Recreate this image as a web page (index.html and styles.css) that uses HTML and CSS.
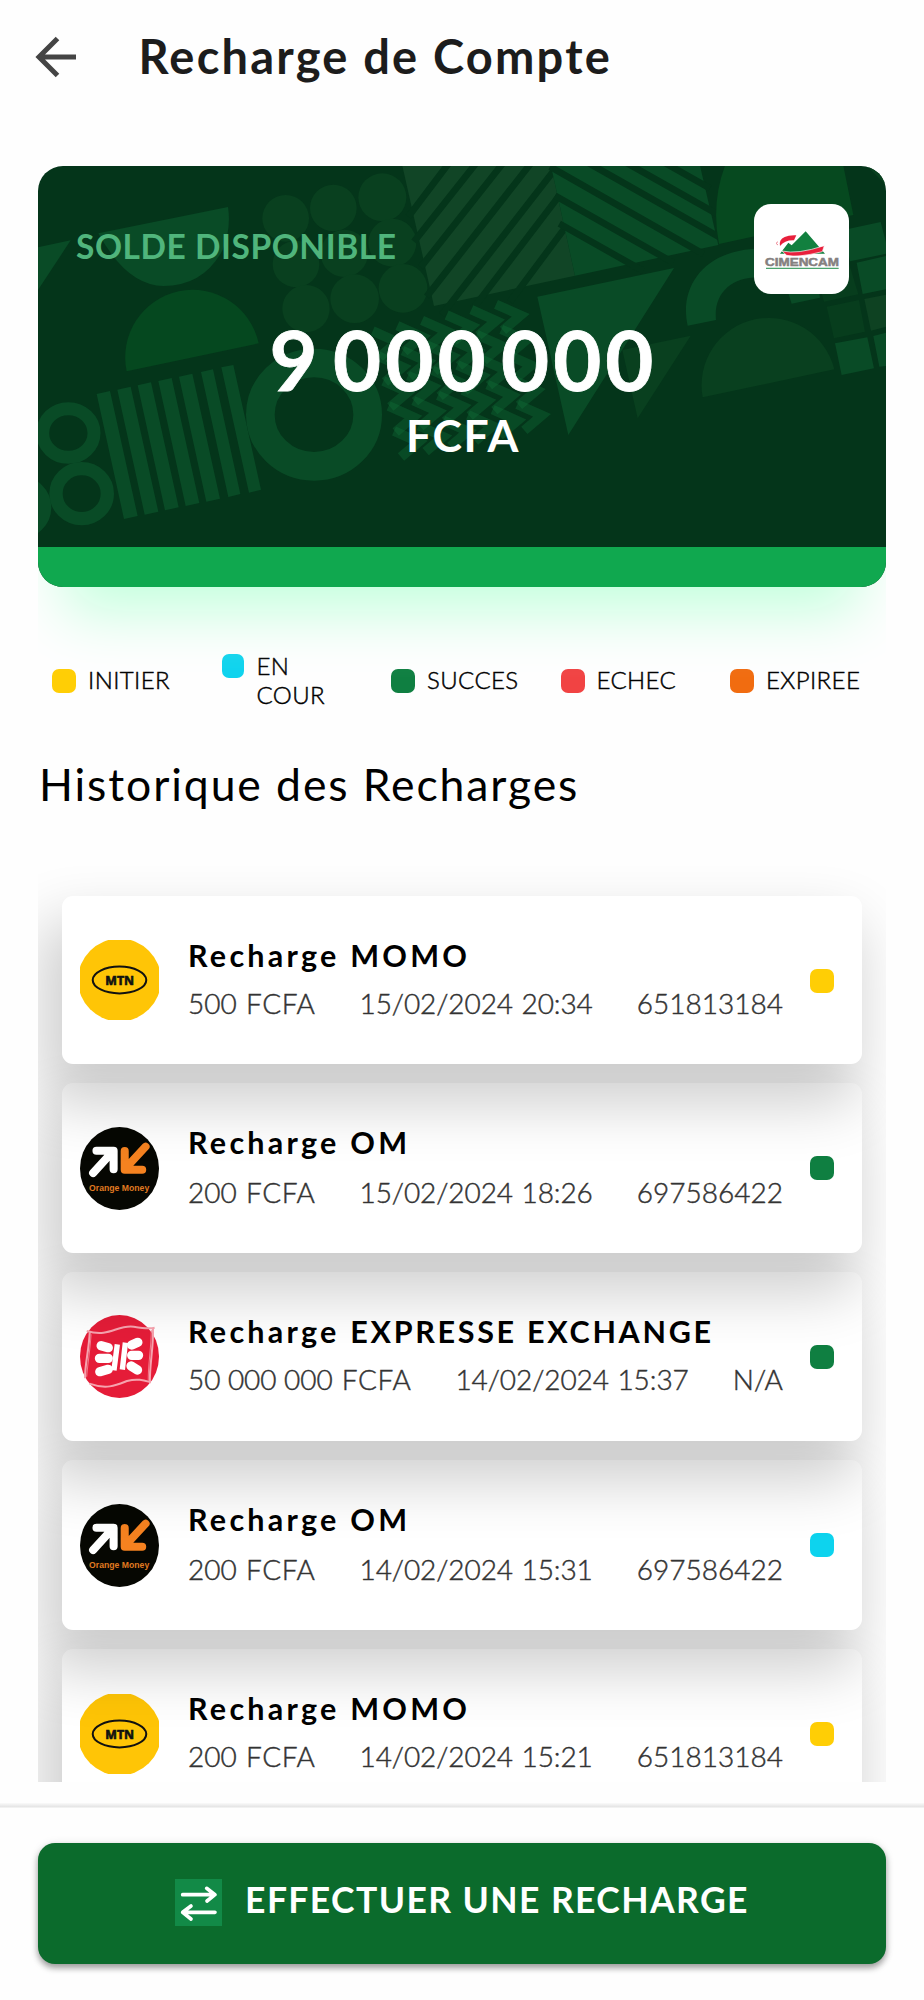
FILE: index.html
```
<!DOCTYPE html>
<html lang="fr">
<head>
<meta charset="utf-8">
<title>Recharge de Compte</title>
<link rel="stylesheet" href="styles.css">
</head>
<body>
<svg class="defs" aria-hidden="true">
  <symbol id="mtn" viewBox="0 0 235 239">
    <circle cx="117.5" cy="119.5" r="124" fill="#ffc506"/>
    <ellipse cx="117.5" cy="119.5" rx="80" ry="40" fill="none" stroke="#111" stroke-width="6"/>
    <text x="75" y="133" textLength="86" lengthAdjust="spacingAndGlyphs" class="mtn-text">MTN</text>
  </symbol>
  <symbol id="om" viewBox="0 0 235 249" preserveAspectRatio="none">
    <ellipse cx="117.5" cy="124.5" rx="117.5" ry="124.5" fill="#060702"/>
    <g fill="none" stroke-width="24" stroke-linecap="round" stroke-linejoin="round">
      <path d="M39 138L95 76M49 71H100V127" stroke="#fff"/>
      <path d="M195 59L138 121M133 72V128H185" stroke="#f58220"/>
    </g>
    <text x="27" y="192" textLength="179" lengthAdjust="spacingAndGlyphs" class="om-text">Orange Money</text>
  </symbol>
  <symbol id="express" viewBox="0 0 235 249" preserveAspectRatio="none">
    <ellipse cx="117.5" cy="124.5" rx="117.5" ry="124.5" fill="#e51c38"/>
    <path d="M20 48C90 68 110 28 160 35C190 40 205 42 222 38M29 52C26 110 14 150 15 190M217 42C219 100 206 150 208 205M28 206C80 225 110 210 140 198C170 190 190 196 208 201" fill="none" stroke="#f6a3ae" stroke-width="6"/>
    <path d="M33 58C30 110 22 150 20 185M212 46C212 100 202 150 203 198" fill="none" stroke="#f07c8c" stroke-width="3"/>
    <g fill="none" stroke="#fff" stroke-linecap="round">
      <path d="M63 92L84 98M58 130H84M59 170L84 163M154 90L172 82M154 121L174 121M152 153L171 165" stroke-width="28"/>
      <path d="M111 88L101 166M135 83L126 164" stroke-width="16" stroke-linecap="butt"/>
    </g>
  </symbol>
</svg>

<header class="topbar">
  <svg class="back" viewBox="0 0 42 42"><path d="M22.500 2.500L4 21L22.500 39.500M4 21H41" fill="none" stroke="#444" stroke-width="5"/></svg>
  <h1>Recharge de Compte</h1>
</header>

<section class="balance">
  <svg class="pattern" viewBox="0 0 848 381">
    <g transform="translate(-8 -16) scale(.33333)">
      <g fill="#094b26">
        <path d="M24 292L122 271L24 420Z"/>
        <path d="M205 250L594 171Q604 235 578 300Q520 408 400 408Q290 406 205 250Z"/>
        <path d="M200 732l40-9l83 375l-41 9zM262 719l40-9l83 375l-41 9zM323 706l40-9l83 375l-41 9zM385 693l40-9l83 375l-41 9zM447 680l40-9l83 375l-41 9zM513 666l36-8l82 374l-36 9zM574 652l36-7l83 374l-36 9z"/>
      </g>
      <path d="M290 664A202 202 0 0 1 686 580Z" fill="#05481f"/>
      <g fill="#09401f">
        <circle cx="767" cy="205" r="70"/><circle cx="910" cy="174" r="70"/><circle cx="1057" cy="142" r="72"/>
        <circle cx="798" cy="342" r="70"/><circle cx="943" cy="310" r="71"/><circle cx="1087" cy="278" r="72"/>
        <circle cx="828" cy="476" r="71"/><circle cx="974" cy="446" r="73"/><circle cx="1119" cy="415" r="73"/>
      </g>
      <g fill="none" stroke="#094b26">
        <ellipse cx="852" cy="794" rx="161" ry="155" stroke-width="86"/>
        <ellipse cx="115" cy="849" rx="77" ry="73" stroke-width="39"/>
        <ellipse cx="155" cy="1031" rx="77" ry="75" stroke-width="40"/>
        <ellipse cx="-33" cy="1072" rx="77" ry="75" stroke-width="40"/>
      </g>
      <path d="M1117 47H1563L1635 377L1212 468Z" fill="#114526"/>
      <path d="M1135 200L1260 35M1152 275L1346 30M1172 352L1428 28M1190 440L1512 28M1235 495L1598 28M1330 475L1610 108M1440 455L1630 200" stroke="#04351a" stroke-width="20"/>
      <g transform="translate(930 30)" fill="none" stroke="#147b3f" stroke-opacity=".3" stroke-width="29">
        <g id="zig-col">
          <path id="zig" d="M468 433L542 466L489 511"/>
          <use href="#zig" x="16" y="75"/><use href="#zig" x="32" y="150"/><use href="#zig" x="48" y="225"/><use href="#zig" x="64" y="300"/>
        </g>
        <use href="#zig-col" x="-74" y="16"/><use href="#zig-col" x="-148" y="32"/><use href="#zig-col" x="-222" y="48"/><use href="#zig-col" x="-296" y="64"/><use href="#zig-col" x="-370" y="80"/>
      </g>
      <g transform="translate(1290 0)">
        <path d="M273 47H720L775 285L345 377Z" fill="#094b26"/>
        <path d="M270 50L730 312M285 137L640 338M298 221L550 363M380 36L790 268M495 36L780 197M610 36L750 115" stroke="#04351a" stroke-width="20"/>
        <path d="M795 47Q753 160 777 282L1180 195L1150 47Z" fill="#06491f"/>
        <path d="M1220 47H1278V105Z" fill="#09401f"/>
        <path d="M683 527C655 400 745 296 900 296V382C815 380 760 430 768 510ZM980 415L995 461L1080 443L1075 415ZM232 440L642 354L325 855Z" fill="#094b26"/>
        <path d="M487 600L692 557L533 805ZM728 742A202 202 0 0 1 1123 658Z" fill="#09401f"/>
        <path d="M1150 240L1262 216L1280 285V311L1170 334ZM1190 338L1278 318V418L1208 432ZM1125 580L1222 562L1242 655L1145 675ZM1240 558L1278 548V648L1258 650Z" fill="#094b26"/>
        <path d="M1213 447L1278 434V530L1233 542Z" fill="#0e4222"/>
        <path d="M1100 470L1197 450L1215 545L1122 565ZM1085 430L1092 455L1195 433L1167 340Z" fill="#073d1d"/>
      </g>
    </g>
  </svg>
  <div class="balance-head">
    <span class="balance-label">SOLDE DISPONIBLE</span>
    <div class="brand">
      <svg viewBox="0 0 285 273">
        <path d="M78 149L103 116L113 124L155 82L213 149Z" fill="#12803f"/>
        <path d="M84 141Q130 152 211 125L205 143Q130 162 98 154Z" fill="#e8203c" stroke="#fff" stroke-width="2"/>
        <path d="M78 126Q74 106 92 99Q104 93 127 94L120 109Q92 108 78 126Z" fill="#e8203c"/>
        <path d="M72 113L66 118L72 123" fill="none" stroke="#ef8795" stroke-width="3"/>
        <text x="33" y="186" textLength="222" lengthAdjust="spacingAndGlyphs" class="brand-text">CIMENCAM</text>
        <path d="M36 193H254" stroke="#4aa36c" stroke-width="4"/>
      </svg>
    </div>
  </div>
  <div class="amount">9 000 000</div>
  <div class="currency">FCFA</div>
  <div class="strip"></div>
</section>

<ul class="legend">
  <li><i class="dot yellow"></i>INITIER</li>
  <li class="two-line"><i class="dot cyan"></i><span>EN<br>COUR</span></li>
  <li><i class="dot green"></i>SUCCES</li>
  <li><i class="dot red"></i>ECHEC</li>
  <li><i class="dot orange"></i>EXPIREE</li>
</ul>

<h2>Historique des Recharges</h2>

<main class="history">
  <article class="entry">
    <svg class="avatar mtn"><use href="#mtn"/></svg>
    <div class="info"><h3>Recharge MOMO</h3>
      <p><span>500<span class="unit"> FCFA</span></span><span class="date">15/02/2024 20:34</span><span>651813184</span></p></div>
    <i class="dot yellow"></i>
  </article>
  <article class="entry om">
    <svg class="avatar"><use href="#om"/></svg>
    <div class="info"><h3>Recharge OM</h3>
      <p><span>200<span class="unit"> FCFA</span></span><span class="date">15/02/2024 18:26</span><span>697586422</span></p></div>
    <i class="dot green"></i>
  </article>
  <article class="entry">
    <svg class="avatar"><use href="#express"/></svg>
    <div class="info"><h3>Recharge <span class="caps">EXPRESSE EXCHANGE</span></h3>
      <p><span class="long">50 000 000<span class="unit"> FCFA</span></span><span class="date">14/02/2024 15:37</span><span>N/A</span></p></div>
    <i class="dot green"></i>
  </article>
  <article class="entry om">
    <svg class="avatar"><use href="#om"/></svg>
    <div class="info"><h3>Recharge OM</h3>
      <p><span>200<span class="unit"> FCFA</span></span><span class="date">14/02/2024 15:31</span><span>697586422</span></p></div>
    <i class="dot cyan"></i>
  </article>
  <article class="entry">
    <svg class="avatar mtn"><use href="#mtn"/></svg>
    <div class="info"><h3>Recharge MOMO</h3>
      <p><span>200<span class="unit"> FCFA</span></span><span class="date">14/02/2024 15:21</span><span>651813184</span></p></div>
    <i class="dot yellow"></i>
  </article>
</main>

<footer class="actions">
  <button type="button">
    <svg class="swap" viewBox="0 0 141 141"><path d="M0 0H141V141H0Z" fill="#128a47"/><path d="M23 47H119M95 28L120 47L96 66M120 100H23M48 81L23 100L48 120" fill="none" stroke="#fff" stroke-width="11" stroke-linecap="round" stroke-linejoin="round"/></svg>
    <span>EFFECTUER UNE RECHARGE</span>
  </button>
</footer>
</body>
</html>
```
FILE: styles.css
```
* { box-sizing: border-box; }
body {
  margin: 0;
  height: 2000px;
  background: #fefefe;
  color: #000;
  font-family: Lato, "Open Sans", sans-serif;
  display: flex;
  flex-direction: column;
  overflow: hidden;
}
h1, h2, h3, p, ul { margin: 0; padding: 0; font-weight: 400; }
svg { display: block; flex: none; }
.defs { position: absolute; width: 0; height: 0; }

.topbar { display: flex; align-items: center; padding: 28px 35px 0; height: 84px; }
.back { width: 42px; height: 42px; margin-top: 2px; }
.topbar h1 {
  margin-left: 61.5px;
  font-size: 47px;
  line-height: 56px;
  font-weight: 700;
  letter-spacing: 2.2px;
  color: #1c1c1c;
}

.balance {
  position: relative;
  flex: none;
  margin: 82px 38px 0;
  height: 421px;
  display: flex;
  flex-direction: column;
  background: #04351a;
  border-radius: 25px;
  box-shadow: 0 52px 56px -28px #c2ffdc;
  clip-path: inset(0 0 -90px 0);
}
.pattern { position: absolute; inset: 0; width: 848px; height: 381px; border-radius: 25px 25px 0 0; overflow: hidden; }
.balance-head { position: relative; display: flex; justify-content: space-between; align-items: flex-start; padding: 38px 37px 0 38px; }
.balance-label { margin-top: 22px; font-size: 33.5px; line-height: 40px; font-weight: 700; letter-spacing: .55px; color: #50b57c; }
.brand { width: 95px; height: 90px; border-radius: 17px; background: #fff; }
.brand svg { width: 95px; height: 91px; }
.brand-text { font: 700 32px "Liberation Sans", Arial, sans-serif; fill: #85807f; stroke: #85807f; stroke-width: 1.5px; }
.amount {
  position: relative;
  margin-top: 15px;
  padding-left: 3px;
  text-align: center;
  font-size: 83px;
  line-height: 100px;
  font-weight: 700;
  letter-spacing: 4.1px;
  word-spacing: -13px;
  color: #fff;
  -webkit-text-stroke: .8px #fff;
}
.currency { position: relative; padding-left: 2px; text-align: center; font-size: 44.5px; line-height: 52px; font-weight: 700; letter-spacing: 1.5px; color: #fff; }
.strip { height: 40px; margin-top: auto; background: #10a84f; border-radius: 0 0 25px 25px; }

.legend {
  display: grid;
  grid-template-columns: repeat(5, 169.5px);
  margin: 65px 0 0 52px;
  height: 57px;
  align-items: center;
  list-style: none;
  font-size: 24px;
  line-height: 28.4px;
  font-weight: 300;
  letter-spacing: .4px;
  -webkit-text-stroke: .45px #000;
}
.legend li { display: flex; align-items: center; gap: 12px; }
.legend .two-line { align-items: flex-start; gap: 13px; }
.legend .cyan { width: 22px; margin-top: 2px; }
.dot { flex: none; width: 24px; height: 24px; border-radius: 7px; }
.yellow { background: #ffce05; }
.cyan { background: #0dd3ee; }
.green { background: #0f7f41; }
.red { background: #f14343; }
.orange { background: #f16c10; }

h2 { margin: 49px 38px 0 39px; font-size: 44.5px; line-height: 52px; letter-spacing: 1.9px; }

.history {
  flex: none;
  margin: 56px 38px 0;
  height: 916px;
  padding: 30px 24px 0;
  overflow: hidden;
  display: grid;
  grid-template-rows: 168px 170px 169px 170px 169px;
  row-gap: 19px;
}
.entry {
  position: relative;
  display: flex;
  align-items: center;
  padding: 0 28px 0 18px;
  border-radius: 11px;
  background: #fff;
  box-shadow: -12px 33px 58px 8px rgba(0, 0, 0, .19);
}
/* each entry casts its shadow over the one below */
.entry:nth-child(1) { z-index: 5; }
.entry:nth-child(2) { z-index: 4; }
.entry:nth-child(3) { z-index: 3; }
.entry:nth-child(4) { z-index: 2; }
.entry:nth-child(5) { z-index: 1; }
.entry:first-child .dot { margin-top: 1px; }
.avatar { width: 79px; height: 83px; }
.avatar.mtn { height: 80px; }
.mtn-text { font: 700 38px "Open Sans", sans-serif; fill: #111; stroke: #111; stroke-width: 2px; }
.om-text { font: 700 25px "Liberation Sans", Arial, sans-serif; fill: #e07a20; }
.info { align-self: flex-start; width: 596px; margin: 41.200px 26px 0 29px; }
.info h3 { font-size: 30.5px; line-height: 36px; font-weight: 700; letter-spacing: 3.25px; white-space: nowrap; }
.info .caps { letter-spacing: 2.7px; }
.info p {
  display: flex;
  justify-content: space-between;
  margin-top: 13.200px;
  padding-right: 1px;
  font-size: 28px;
  line-height: 34px;
  font-weight: 300;
  color: #333;
  white-space: nowrap;
  -webkit-text-stroke: .45px #333;
}
.om .info p { margin-top: 15px; }
.unit { word-spacing: 1px; letter-spacing: .6px; }
.long { letter-spacing: -.05px; }
.date { word-spacing: 1px; letter-spacing: -.08px; }

.actions { flex: none; margin-top: 21px; padding: 40px 38px 0; background: linear-gradient(#fafafa, #e4e4e4 4px, #fefefe 5px); }
.actions button {
  width: 100%;
  height: 121px;
  display: flex;
  align-items: center;
  justify-content: center;
  gap: 23px;
  border: 0;
  border-radius: 17px;
  background: #0b6b2c;
  color: #fff;
  font: 700 35.5px/42px Lato, sans-serif;
  letter-spacing: 1.4px;
  box-shadow: 0 4px 6px rgba(0, 0, 0, .35), 0 1px 10px rgba(0, 0, 0, .1);
}
.actions button span { margin-bottom: 7px; }
.swap { width: 47px; height: 47px; margin-bottom: 2px; }
```
